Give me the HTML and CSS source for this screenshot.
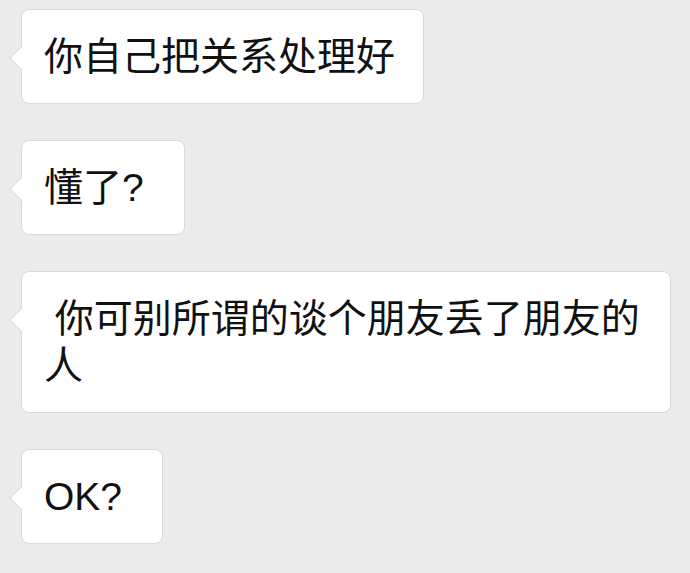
FILE: index.html
```html
<!DOCTYPE html>
<html lang="zh-CN">
<head>
  <meta charset="UTF-8" />
  <meta name="viewport" content="width=device-width, initial-scale=1.0" />
  <title>聊天记录</title>
  <link rel="stylesheet" href="styles.css">
</head>
<body>
  <div class="chat">
    <div class="bubble">你自己把关系处理好</div>
    <div class="bubble short">懂了?</div>
    <div class="bubble wide">&nbsp;你可别所谓的谈个朋友丢了朋友的人</div>
    <div class="bubble short">OK?</div>
  </div>
</body>
</html>
```

FILE: styles.css
```css
* {
  margin: 0;
  padding: 0;
  box-sizing: border-box;
}

body {
  width: 100%;
  height: 100vh;
  background-color: #ebebeb;
  font-family: "Liberation Sans", "Noto Sans CJK SC", sans-serif;
  color: #111;
}

.chat {
  display: flex;
  flex-direction: column;
  align-items: flex-start;
  gap: 36px;
  padding: 9px 19px 0 21px;
}

.bubble {
  position: relative;
  max-width: 650px;
  padding: 23px 28px 23px 22px;
  font-size: 39px;
  line-height: 47px;
  background-color: #fff;
  border: 1px solid #d9d9d9;
  border-radius: 8px;
}

/* little tail on the left */
.bubble::before {
  content: "";
  position: absolute;
  left: -9px;
  top: 39px;
  width: 17px;
  height: 17px;
  background-color: #fff;
  border-left: 1px solid #d9d9d9;
  border-bottom: 1px solid #d9d9d9;
  transform: rotate(45deg);
}

.short {
  padding-right: 40px;
}

.wide {
  width: 650px;
}
```
